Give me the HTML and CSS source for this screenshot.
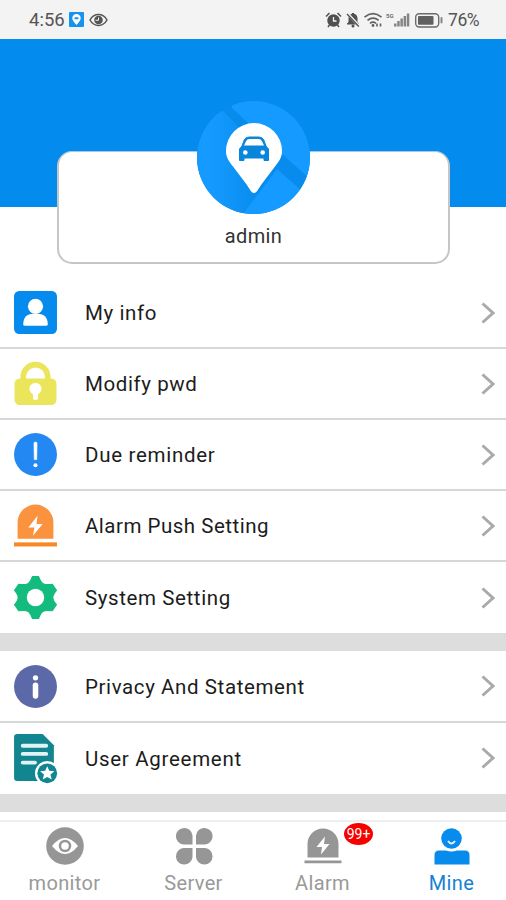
FILE: index.html
```html
<!DOCTYPE html>
<html lang="en">
<head>
<meta charset="utf-8">
<title>Mine</title>
<link rel="stylesheet" href="styles.css">
</head>
<body>
<div class="app">
  <header class="status">
    <span class="time">4:56</span>
    <svg class="status-pin" width="15" height="15" viewBox="0 0 15 15"><rect width="15" height="15" rx="1" fill="#1593ee"/><path d="M7.5 13C5 10 3.3 8.300 3.300 6.200a4.200 4.200 0 0 1 8.400 0C11.700 8.300 10 10 7.500 13z" fill="#fff"/><rect x="5.500" y="5.300" width="4" height="2" rx=".6" fill="#1593ee"/></svg>
    <svg class="status-eye" width="19" height="14" viewBox="0 0 19 14"><path d="M1 7C5-.2 14-.2 18 7 14 14.200 5 14.200 1 7z" fill="none" stroke="#555" stroke-width="1.500"/><circle cx="9.500" cy="7" r="4.300" fill="#555"/><path d="M9.500 4.500v2.800h-3" fill="none" stroke="#eee" stroke-width="1"/></svg>
    <svg class="status-icons" width="120" height="20" viewBox="324 9 120 20">
      <g fill="#505050"><circle cx="333.500" cy="19.500" r="6.200"/><path d="M326 15.500l3.500-3.500M341 15.500l-3.500-3.500M329.500 24l-1.500 2M337.500 24l1.500 2" stroke="#505050" stroke-width="1.500"/><path d="M333.500 16v4h3" fill="none" stroke="#f3f3f3" stroke-width="1.300"/>
      <path d="M347 23.500v-1l1.500-1.500v-3.500c0-2.500 1.500-4.200 3.500-4.700v-.800h2v.800c2 .5 3.500 2.200 3.500 4.700V21l1.500 1.500v1z"/><circle cx="353" cy="25" r="1.500"/></g>
      <path d="M347.500 12.500l11.500 12.500" stroke="#f3f3f3" stroke-width="2.600"/><path d="M347 13l11.800 12.500" stroke="#505050" stroke-width="1.300"/>
      <g fill="none" stroke="#606060" stroke-width="1.700"><path d="M364.500 16.200q8.500-7 17 0M367.500 19.300q5.500-4.500 11.200 0M370 22.300q3-2.300 6 0"/></g><circle cx="373" cy="24.500" r="1.400" fill="#606060"/><path d="M377 22.500v3M380.500 22.500v3" stroke="#606060" stroke-width="1.600"/>
      <text x="386" y="17" class="five-g">5G</text>
      <g fill="#858585"><rect x="394" y="22.500" width="2.500" height="3"/><rect x="397.200" y="20" width="2.500" height="5.500"/><rect x="400.400" y="17.500" width="2.500" height="8"/><rect x="403.600" y="15" width="2.500" height="10.500"/><rect x="406.800" y="12.500" width="2.500" height="13"/></g>
      <rect x="415.700" y="12.700" width="23" height="13.300" rx="3.500" fill="none" stroke="#6a6a6a" stroke-width="1.400"/><rect x="418" y="15" width="15.500" height="8.700" rx="1" fill="#606060"/><rect x="440.500" y="16" width="2" height="6.500" rx="1" fill="#888"/>
    </svg>
    <span class="percent">76%</span>
  </header>

  <section class="profile">
    <div class="card">
      <svg class="avatar" width="113" height="113" viewBox="0 0 113 113">
        <defs><clipPath id="disc"><circle cx="56.500" cy="56.500" r="56.500"/></clipPath>
        <linearGradient id="shade" x1="0" y1="0" x2="1" y2="0"><stop offset="0.200" stop-color="#159aff"/><stop offset="1" stop-color="#078bec"/></linearGradient></defs>
        <g clip-path="url(#disc)"><rect width="113" height="113" fill="#078bec"/><path d="M35 0v7L113 80V0z" fill="#159aff"/><path d="M0 0h15l12 11 38 38v43L44 113H0z" fill="url(#shade)"/><path d="M86 54l27 24-10 12-23-22z" fill="#078bec"/><path d="M80 68l24 21-22 24H46z" fill="#159aff"/></g>
        <path d="M57 92C54.500 92 53 88.500 50 84L36 65.500C31.500 60 29 56 29 50a28 28 0 0 1 56 0c0 6-2.500 10-7 15.500L64 84c-3 4.500-4.500 8-7 8z" fill="#fff"/>
        <path d="M45 45l2.200-6q1.300-3 5-3h9.600q3.700 0 5 3l2.200 6 2.500 3v11.500h-4.500V57H47v2.500h-4.500V48z" fill="#0986dc" stroke="#0986dc" stroke-linejoin="round"/>
        <path d="M47 44.500l2-4.300q1-2.200 3.500-2.200h9q2.500 0 3.500 2.200l2 4.300z" fill="#fff"/><circle cx="48.300" cy="51.500" r="2.300" fill="#fff"/><circle cx="65.700" cy="51.500" r="2.300" fill="#fff"/>
      </svg>
      <span class="name">admin</span>
    </div>
  </section>

  <main>
    <div class="group">
      <div class="row"><svg class="icon" viewBox="0 0 44 44"><rect x="1" y="1" width="42" height="42" rx="5" fill="#058bed"/><circle cx="22" cy="16" r="7.400" fill="#fff"/><path d="M10 33.500C10 27 14 23.500 18 23.500h8c4 0 8 3.500 8 10q0 1.500-2 1.500H12q-2 0-2-1.500z" fill="#fff"/></svg><span class="label">My info</span><svg class="chevron" viewBox="0 0 14 22"><path d="M1.500 1.500L12 11 1.500 20.500"/></svg></div>
      <div class="row"><svg class="icon" viewBox="0 0 44 44"><path d="M10 20V15.500a12 12 0 0 1 24 0V20" fill="none" stroke="#ebe55b" stroke-width="5.500"/><rect x="1.500" y="17" width="41" height="26" rx="5" fill="#ebe55b"/><path d="M19.500 32.500C13.500 29 16 21.500 22 21.500s8.500 7.500 2.500 11V37q-2.500 2.500-5 0z" fill="#fff"/></svg><span class="label">Modify pwd</span><svg class="chevron" viewBox="0 0 14 22"><path d="M1.500 1.500L12 11 1.500 20.500"/></svg></div>
      <div class="row"><svg class="icon" viewBox="0 0 44 44"><circle cx="22" cy="22" r="21" fill="#2388f2"/><path d="M20.500 10.500q1.500-1.600 3 0L23.200 27h-2.400z" fill="#fff" stroke="#fff" stroke-width=".6"/><circle cx="22" cy="32.500" r="2" fill="#fff"/></svg><span class="label wide">Due reminder</span><svg class="chevron" viewBox="0 0 14 22"><path d="M1.500 1.500L12 11 1.500 20.500"/></svg></div>
      <div class="row"><svg class="icon" viewBox="0 0 44 44"><path d="M4.500 35V19a17.500 17.500 0 0 1 35 0v16z" fill="#fb923d"/><path d="M24 12.500L15 24h6l-1.500 8L29 20.500h-6z" fill="#fff"/><rect x="1" y="38.500" width="42" height="4" fill="#f58a25"/></svg><span class="label tight">Alarm Push Setting</span><svg class="chevron" viewBox="0 0 14 22"><path d="M1.500 1.500L12 11 1.500 20.500"/></svg></div>
      <div class="row"><svg class="icon" viewBox="0 0 44 44"><path d="M19 1.500h6Q27 7 29.500 8.500 32 10 38.500 9L42.500 15Q39 19 39 22T42.500 29L38.500 35Q32 34 29.500 35.500 27 37 25 42.500H19Q17 37 14.500 35.500 12 34 5.500 35L1.500 29Q5 25 5 22T1.500 15L5.500 9Q12 10 14.500 8.500 17 7 19 1.500z" fill="#13bb7f" stroke="#13bb7f" stroke-linejoin="round"/><circle cx="22" cy="22" r="8.500" fill="#fff"/></svg><span class="label">System Setting</span><svg class="chevron" viewBox="0 0 14 22"><path d="M1.500 1.500L12 11 1.500 20.500"/></svg></div>
    </div>
    <div class="group second">
      <div class="row"><svg class="icon" viewBox="0 0 44 44"><circle cx="22" cy="22" r="21" fill="#5c69a8"/><circle cx="22" cy="13.500" r="2.600" fill="#fff"/><rect x="19.300" y="18" width="5.400" height="16" rx="2.700" fill="#fff"/></svg><span class="label">Privacy And Statement</span><svg class="chevron" viewBox="0 0 14 22"><path d="M1.500 1.500L12 11 1.500 20.500"/></svg></div>
      <div class="row"><svg class="icon doc" viewBox="0 0 44 50"><path d="M4 1h25L40 12v35H4q-3 0-3-3V4q0-3 3-3z" fill="#118590"/><path d="M9.500 12.500h23M9.500 20.500h23M9.500 29h12" stroke="#e2f3f3" stroke-width="3.800" stroke-linecap="round"/><circle cx="33.500" cy="39.500" r="12" fill="#fff"/><circle cx="33.500" cy="39.500" r="9.700" fill="#118590"/><path d="M33.500 32.500l2 4.600 5 .4-3.800 3.300 1.200 4.900-4.400-2.600-4.400 2.600 1.200-4.900-3.800-3.300 5-.4z" fill="#fff"/></svg><span class="label wide">User Agreement</span><svg class="chevron" viewBox="0 0 14 22"><path d="M1.500 1.500L12 11 1.500 20.500"/></svg></div>
    </div>
  </main>

  <nav class="tabs">
    <div class="tab"><svg viewBox="0 0 40 40"><circle cx="20" cy="20" r="18.800"/><path d="M7 20Q20 4 33 20 20 36 7 20z" fill="#fff"/><circle cx="20" cy="20" r="5" fill="#fff" stroke="#969696" stroke-width="2.500"/></svg><span>monitor</span></div>
    <div class="tab"><svg viewBox="0 0 40 40"><path d="M18.500 18.500H9.500a8.300 8.300 0 1 1 9-9zM22 18.500v-9a8.300 8.300 0 1 1 9 9zM18.500 22v9a8.300 8.300 0 1 1-9-9zM22 22h9a8.300 8.300 0 1 1-9 9z"/></svg><span>Server</span></div>
    <div class="tab"><svg viewBox="0 0 40 40"><path d="M4.500 31.500V18a15.500 15.500 0 0 1 31 0v13.500z"/><path d="M22 10.500L13.500 21h5.500l-1 7.500 8.500-10.500h-5.500z" fill="#fff"/><path d="M1.500 34.500h37v2.700h-37z"/></svg><span>Alarm</span><b class="badge">99+</b></div>
    <div class="tab active"><svg viewBox="0 0 40 40"><circle cx="19.500" cy="12.500" r="10.300"/><path d="M16 15q3.500 5 7 0" fill="none" stroke="#dff1ff" stroke-width="2"/><path d="M2.500 38.500V29q0-4.500 4.500-4.500h7q5.500 2 11 0h8q4.500 0 4.500 4.500v9.500z"/></svg><span>Mine</span></div>
  </nav>
</div>
</body>
</html>
```
FILE: styles.css
```css
* { box-sizing: border-box; }
body { margin: 0; background: #fff; font-family: Roboto, "Liberation Sans", sans-serif; color: #1c1c1c; }
.app { width: 506px; height: 900px; display: flex; flex-direction: column; overflow: hidden; }
.status { height: 39px; flex: none; background: #f3f3f3; display: flex; align-items: center; padding: 0 25px 0 29px; color: #555; font-size: 18.5px; }
.time { width: 36px; margin-right: 4px; }
.status-eye { margin-left: 5px; }
.status-icons { margin-left: auto; }
.five-g { font-size: 6px; font-weight: bold; fill: #707070; }
.percent { width: 33px; margin-left: 4px; font-size: 17.5px; letter-spacing: -.4px; }
.profile { height: 239px; flex: none; padding: 112px 56px 0 57px; background: linear-gradient(#038bee 168px, #fff 168px); }
.card { position: relative; height: 113px; border: 2px solid #c6c6c6; border-top: 1px solid #a5c9e2; border-radius: 15px; background: #fff; display: flex; align-items: flex-end; justify-content: center; padding-bottom: 14px; }
.avatar { position: absolute; left: 138px; top: -51px; }
.name { font-size: 20px; line-height: 24px; letter-spacing: .35px; color: #333; }
main { height: 534px; flex: none; background: #ddd; }
.group { background: #fff; }
.second { margin-top: 18px; }
.row { height: 71.1px; display: flex; align-items: center; padding: 0 11px 0 13px; border-bottom: 2px solid #d6d8d8; }
.row:last-child { border-bottom: 0; }
.icon { width: 45px; height: 45px; flex: none; margin-right: 27px; }
.doc { height: 51px; }
.label { flex: 1; font-size: 20.5px; line-height: 26px; padding-top: 1px; white-space: nowrap; letter-spacing: .6px; }
.wide { letter-spacing: .7px; }
.tight { letter-spacing: .5px; }
.chevron { width: 14px; height: 22px; fill: none; stroke: #aaa; stroke-width: 3; }
.tabs { flex: 1; margin-top: 8px; border-top: 2px solid #eee; display: grid; grid-template-columns: repeat(4, 129px); color: #999; }
.tab { position: relative; display: flex; flex-direction: column; align-items: center; padding-top: 4px; font-size: 20px; letter-spacing: .35px; line-height: 24px; }
.tab svg { width: 40px; height: 40px; fill: #969696; margin-bottom: 5px; }
.active { color: #1681d5; }
.active svg { fill: #078bed; }
.badge { position: absolute; left: 86px; top: 1px; width: 29px; height: 22px; border-radius: 50%; background: #f60000; color: #fff; font-size: 14px; font-weight: 400; line-height: 22px; text-align: center; letter-spacing: 0; }
```
